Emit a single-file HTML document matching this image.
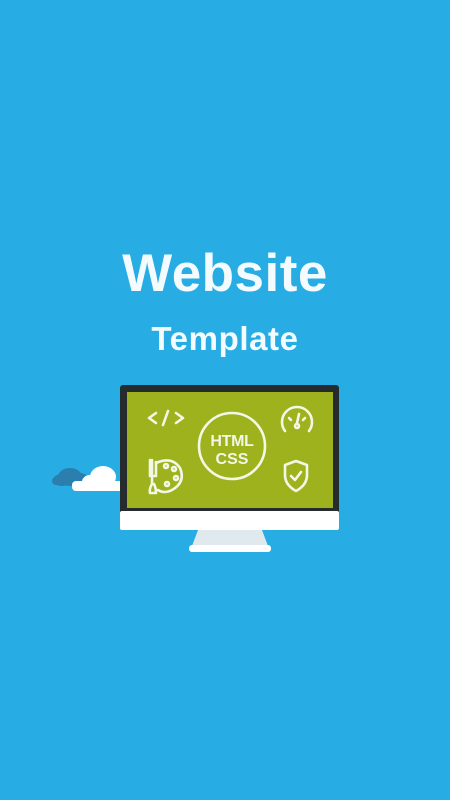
<!DOCTYPE html>
<html><head><meta charset="utf-8"><style>
html,body{margin:0;padding:0}
body{width:450px;height:800px;background:#27ade3;position:relative;overflow:hidden;font-family:"Liberation Sans",sans-serif}
.t1{position:absolute;left:0;width:450px;top:243px;text-align:center;color:#f4fbfe;font-weight:bold;font-size:53px;letter-spacing:0.5px}
.t2{position:absolute;left:0;width:450px;top:320px;text-align:center;color:#f4fbfe;font-weight:bold;font-size:33px;letter-spacing:0.6px}
</style></head><body>
<div class="t1">Website</div>
<div class="t2">Template</div>
<svg width="450" height="800" style="position:absolute;left:0;top:0">
<g fill="#2a7fae">
<ellipse cx="70" cy="477" rx="12" ry="9"/><ellipse cx="62" cy="480" rx="9" ry="6"/><ellipse cx="80" cy="479" rx="8" ry="6"/>
<rect x="52" y="477" width="38" height="8" rx="4"/></g>
<g fill="#fff">
<ellipse cx="103" cy="477" rx="13" ry="11"/><ellipse cx="90" cy="482" rx="8" ry="7"/>
<rect x="72" y="481" width="52" height="10" rx="4"/></g>
<polygon points="198,530 262,530 268,546 192,546" fill="#dfe9ee"/>
<rect x="189" y="545" width="82" height="7" rx="3" fill="#fff"/>
<rect x="120" y="385" width="219" height="145" rx="3" fill="#262b2e"/>
<rect x="120" y="511" width="219" height="19" rx="2" fill="#fff"/>
<rect x="127" y="392" width="206" height="116" fill="#9db21d"/>
<g stroke="#f3f7e6" stroke-width="2.6" fill="none" stroke-linecap="round" stroke-linejoin="round">
<circle cx="232" cy="446" r="33"/>
<path d="M156 413 L149 418 L156 423 M176 413 L183 418 L176 423 M168 411 L163 425"/>
<path d="M285 431 A15 15 0 1 1 309 431"/>
<path d="M297 423 L299 414 M289 418 L291 420 M305 418 L303 420"/>
<circle cx="297" cy="426" r="2"/>
<path d="M296 461 L307 465 L307 475 Q307 485 296 491 Q285 485 285 475 L285 465 Z"/>
<path d="M291 476 L295 480 L301 472"/>
<path d="M156 463 Q172 456 180 468 Q186 482 172 490 Q164 494 158 490"/>
<circle cx="166" cy="466" r="2"/><circle cx="174" cy="469" r="2"/><circle cx="176" cy="478" r="2"/><circle cx="167" cy="484" r="2"/>
<path d="M152 460 L152 484 Q149 489 150 493 L156 493 Q156 488 154 484 M150 460 L150 476 L156 476 L156 462"/>
</g>
<text x="232" y="446" text-anchor="middle" font-family="Liberation Sans" font-weight="bold" font-size="16" letter-spacing="-0.3" fill="#f3f7e6">HTML</text>
<text x="232" y="464" text-anchor="middle" font-family="Liberation Sans" font-weight="bold" font-size="16" fill="#f3f7e6">CSS</text>
</svg>
</body></html>
